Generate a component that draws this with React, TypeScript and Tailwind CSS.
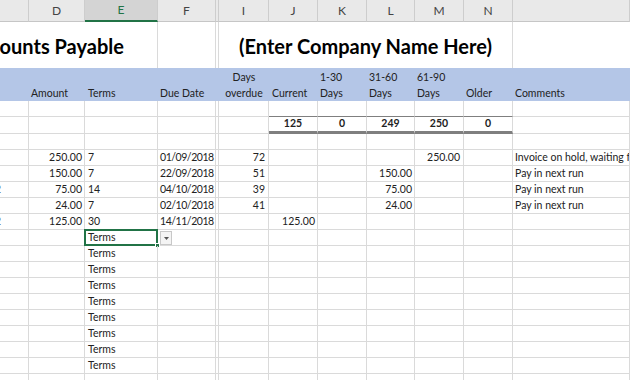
import React from 'react';

// column widths in px; each cell draws its own right/bottom gridline
const W = { C: 29, D: 56, E: 73, F: 58, H: 3, I: 50, J: 49, K: 49, L: 48, M: 49, N: 49 };

const font = { fontFamily: 'Lato, "Open Sans", sans-serif' };

type Row = {
  clip?: string;
  amount?: string;
  terms?: string;
  due?: string;
  overdue?: string;
  cur?: string;
  d30?: string;
  d60?: string;
  d90?: string;
  older?: string;
  note?: string;
  selected?: boolean;
};

const rows: Row[] = [
  {},
  { amount: '250.00', terms: '7', due: '01/09/2018', overdue: '72', d90: '250.00', note: 'Invoice on hold, waiting for credit note' },
  { amount: '150.00', terms: '7', due: '22/09/2018', overdue: '51', d60: '150.00', note: 'Pay in next run' },
  { clip: '2', amount: '75.00', terms: '14', due: '04/10/2018', overdue: '39', d60: '75.00', note: 'Pay in next run' },
  { amount: '24.00', terms: '7', due: '02/10/2018', overdue: '41', d60: '24.00', note: 'Pay in next run' },
  { clip: '2', amount: '125.00', terms: '30', due: '14/11/2018', cur: '125.00' },
  { terms: 'Terms', selected: true },
  { terms: 'Terms' },
  { terms: 'Terms' },
  { terms: 'Terms' },
  { terms: 'Terms' },
  { terms: 'Terms' },
  { terms: 'Terms' },
  { terms: 'Terms' },
  { terms: 'Terms' },
  {},
];

function Cell({ w, children, className = '' }: { w?: number; children?: React.ReactNode; className?: string }) {
  return (
    <div
      className={`shrink-0 h-full border-r border-b border-[#dadada] flex items-end pb-[1px] leading-[14px] overflow-hidden whitespace-nowrap ${w ? '' : 'flex-1'} ${className}`}
      style={w ? { width: w } : undefined}
    >
      {children}
    </div>
  );
}

function ColHead({ w, label, active }: { w?: number; label?: string; active?: boolean }) {
  return (
    <div
      className={`shrink-0 h-full flex items-center justify-center border-r border-[#cdcdcd] text-[12px] ${
        active ? 'bg-[#d4d4d4] border-b-2 border-b-[#217346] text-[#217346]' : 'border-b border-b-[#c6c6c6] text-[#444]'
      } ${w ? '' : 'flex-1'}`}
      style={w ? { width: w } : undefined}
    >
      {label}
    </div>
  );
}

export default function App() {
  return (
    <div className="w-[630px] h-[380px] overflow-hidden bg-white text-[10.5px] text-[#222]" style={font}>
      {/* column letters */}
      <div className="flex h-[22px] bg-[#e9e9e9]">
        <ColHead w={W.C} />
        <ColHead w={W.D} label="D" />
        <ColHead w={W.E} label="E" active />
        <ColHead w={W.F} label="F" />
        <ColHead w={W.H} />
        <ColHead w={W.I} label="I" />
        <ColHead w={W.J} label="J" />
        <ColHead w={W.K} label="K" />
        <ColHead w={W.L} label="L" />
        <ColHead w={W.M} label="M" />
        <ColHead w={W.N} label="N" />
        <ColHead />
      </div>

      {/* title row */}
      <div className="flex h-[46px] text-[20px] font-bold text-black">
        <div className="shrink-0 w-[158px] border-r border-[#dadada] flex items-center overflow-hidden whitespace-nowrap">
          <span className="-ml-[33px] mt-[2px]">Accounts Payable</span>
        </div>
        <div className="shrink-0 w-[58px] border-r border-[#dadada]" />
        <div className="shrink-0 w-[3px] border-r border-[#dadada]" />
        <div className="shrink-0 w-[294px] border-r border-[#dadada] flex items-center justify-center whitespace-nowrap">
          <span className="mt-[2px]">(Enter Company Name Here)</span>
        </div>
        <div className="flex-1" />
      </div>

      {/* blue heading band */}
      <div className="flex h-[33px] bg-[#b4c6e7] leading-[16px] text-[#222]">
        <div className="shrink-0" style={{ width: W.C }} />
        <div className="shrink-0 flex items-end pl-[2px]" style={{ width: W.D }}>Amount</div>
        <div className="shrink-0 flex items-end pl-[3px]" style={{ width: W.E }}>Terms</div>
        <div className="shrink-0 flex items-end pl-[2px]" style={{ width: W.F + W.H }}>Due Date</div>
        <div className="shrink-0 flex flex-col items-center justify-end" style={{ width: W.I }}>
          <span>Days</span>
          <span>overdue</span>
        </div>
        <div className="shrink-0 flex items-end pl-[3px]" style={{ width: W.J }}>Current</div>
        <div className="shrink-0 flex flex-col justify-end pl-[2px]" style={{ width: W.K }}>
          <span>1-30</span>
          <span>Days</span>
        </div>
        <div className="shrink-0 flex flex-col justify-end pl-[2px]" style={{ width: W.L }}>
          <span>31-60</span>
          <span>Days</span>
        </div>
        <div className="shrink-0 flex flex-col justify-end pl-[2px]" style={{ width: W.M }}>
          <span>61-90</span>
          <span>Days</span>
        </div>
        <div className="shrink-0 flex items-end pl-[2px]" style={{ width: W.N }}>Older</div>
        <div className="flex-1 flex items-end pl-[2px]">Comments</div>
      </div>

      {/* blank row above totals */}
      <div className="flex h-[16px]">
        <Cell w={W.C} />
        <Cell w={W.D} />
        <Cell w={W.E} />
        <Cell w={W.F} />
        <Cell w={W.H} />
        <Cell w={W.I} />
        <Cell w={W.J} className="border-b-[#7f7f7f]" />
        <Cell w={W.K} className="border-b-[#7f7f7f]" />
        <Cell w={W.L} className="border-b-[#7f7f7f]" />
        <Cell w={W.M} className="border-b-[#7f7f7f]" />
        <Cell w={W.N} className="border-b-[#7f7f7f]" />
        <Cell />
      </div>

      {/* totals */}
      <div className="flex h-[17px] font-bold">
        <Cell w={W.C} />
        <Cell w={W.D} />
        <Cell w={W.E} />
        <Cell w={W.F} />
        <Cell w={W.H} />
        <Cell w={W.I} />
        {['125', '0', '249', '250', '0'].map((v, i) => (
          <Cell
            key={i}
            w={[W.J, W.K, W.L, W.M, W.N][i]}
            className="justify-center items-center pb-0 leading-[13px] border-b-[3px] border-b-[#7f7f7f]"
          >
            {v}
          </Cell>
        ))}
        <Cell />
      </div>

      {rows.map((r, i) => (
        <div key={i} className="flex h-[16px] relative">
          <Cell w={W.C}>
            {r.clip && <span className="-ml-[5px] text-[#555]">{r.clip}</span>}
          </Cell>
          <Cell w={W.D} className="justify-end pr-[2px]">{r.amount}</Cell>
          <Cell w={W.E} className="pl-[3px]">{r.terms}</Cell>
          <Cell w={W.F} className="pl-[2px] tracking-[-0.45px]">{r.due}</Cell>
          <Cell w={W.H} />
          <Cell w={W.I} className="justify-end pr-[3px]">{r.overdue}</Cell>
          <Cell w={W.J} className="justify-end pr-[2px]">{r.cur}</Cell>
          <Cell w={W.K} className="justify-end pr-[2px]">{r.d30}</Cell>
          <Cell w={W.L} className="justify-end pr-[2px]">{r.d60}</Cell>
          <Cell w={W.M} className="justify-end pr-[3px]">{r.d90}</Cell>
          <Cell w={W.N} className="justify-end pr-[2px]">{r.older}</Cell>
          <Cell className="pl-[2px]">{r.note}</Cell>

          {r.selected && (
            <>
              {/* active cell outline + fill handle */}
              <div className="absolute left-[84px] -top-[1px] w-[74px] h-[17px] border-2 border-[#217346] pointer-events-none" />
              <div className="absolute left-[155px] top-[13px] w-[5px] h-[5px] bg-[#217346] border border-white" />
              {/* validation dropdown button */}
              <div className="absolute left-[160px] top-[1px] w-[12px] h-[14px] bg-[#f4f4f4] border border-[#c8c8c8] flex items-center justify-center">
                <svg width="5" height="3" viewBox="0 0 5 3">
                  <path d="M0 0h5L2.5 3z" fill="#555" />
                </svg>
              </div>
            </>
          )}
        </div>
      ))}
    </div>
  );
}
